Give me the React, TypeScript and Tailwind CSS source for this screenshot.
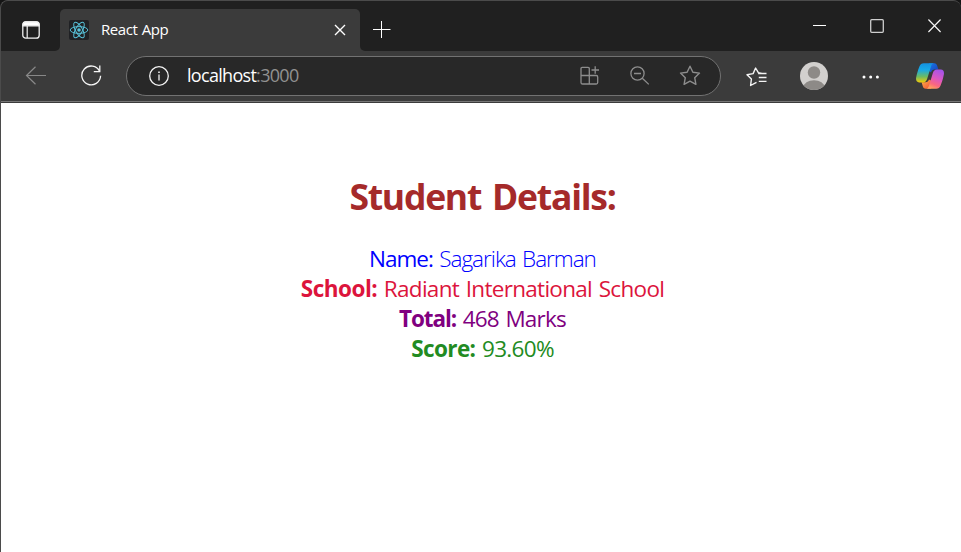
import React from 'react';

const FONT = "font-['Open_Sans','Noto_Sans',sans-serif]";

function ReactLogo() {
  return (
    <svg width="20" height="20" viewBox="0 0 20 20" fill="none" stroke="#58c4dc" strokeWidth="0.95">
      <rect width="20" height="20" rx="2" fill="#202124" stroke="none" />
      <ellipse cx="10" cy="10" rx="8.8" ry="3.4" />
      <ellipse cx="10" cy="10" rx="8.8" ry="3.4" transform="rotate(60 10 10)" />
      <ellipse cx="10" cy="10" rx="8.8" ry="3.4" transform="rotate(120 10 10)" />
      <circle cx="10" cy="10" r="1.8" fill="#58c4dc" stroke="none" />
    </svg>
  );
}

function CopilotLogo() {
  return (
    <svg width="28" height="26" viewBox="0 0 28 26">
      <defs>
        <linearGradient id="cpLeft" x1="0" y1="0" x2="0" y2="1">
          <stop offset="0" stopColor="#1490df" />
          <stop offset="0.35" stopColor="#18a9e6" />
          <stop offset="0.7" stopColor="#6dbb63" />
          <stop offset="1" stopColor="#f2cb08" />
        </linearGradient>
        <linearGradient id="cpRight" x1="0.7" y1="0" x2="0.3" y2="1">
          <stop offset="0" stopColor="#a653ea" />
          <stop offset="0.45" stopColor="#dd58c0" />
          <stop offset="0.75" stopColor="#fa6780" />
          <stop offset="1" stopColor="#ffa65c" />
        </linearGradient>
        <linearGradient id="cpTop" x1="0" y1="0" x2="1" y2="1">
          <stop offset="0" stopColor="#1877e8" />
          <stop offset="1" stopColor="#1740b8" />
        </linearGradient>
        <linearGradient id="cpBottom" x1="0" y1="0" x2="1" y2="1">
          <stop offset="0" stopColor="#ffb247" />
          <stop offset="1" stopColor="#ee4b35" />
        </linearGradient>
      </defs>
      <path d="M13 0.2H18.2C20 0.2 20.8 1.3 21.3 3L22.4 6.6H18.5C16.6 6.6 15.5 7.7 15 9.4L13 8Z" fill="url(#cpTop)" />
      <path d="M15 25.8H9.8C8 25.8 7.2 24.7 6.7 23L5.6 19.2H9.5C11.4 19.2 12.5 18.3 13 16.6L16 18Z" fill="url(#cpBottom)" />
      <path d="M7.8 0.2H18C16.1 0.5 15.5 1.8 15 3.5L11.2 15.8C10.4 18.2 9.3 19.4 7 19.4H3.2C.6 19.4-.4 17.2.2 14.3C.9 10.5 2 7.2 3.3 3.7C4.2 1.3 5.6.2 7.8.2Z" fill="url(#cpLeft)" />
      <path d="M20.2 25.8H10C11.9 25.5 12.5 24.2 13 22.5L16.8 10.2C17.6 7.8 18.7 6.6 21 6.6H24.8C27.4 6.6 28.4 8.8 27.8 11.7C27.1 15.5 26 18.8 24.7 22.3C23.8 24.7 22.4 25.8 20.2 25.8Z" fill="url(#cpRight)" />
    </svg>
  );
}

function TabStrip() {
  return (
    <div className="flex h-[50px] shrink-0 items-start">
      <div className="flex h-[50px] w-[59px] items-start rounded-br-[5px] bg-[#202020] pl-[21px] pt-[20px]">
        <svg width="18" height="18" viewBox="0 0 18 18" fill="none" stroke="#f2f2f2" strokeWidth="1.3">
          <rect x="0.8" y="0.8" width="16.4" height="16.4" rx="3" />
          <path d="M1 3.7Q1 1 3.7 1H14.3Q17 1 17 3.7V4.8H1Z" fill="#fff" />
          <path d="M5.2 5V17" strokeWidth="1.2" />
        </svg>
      </div>
      <div className="h-[50px] w-[300px] bg-[#202020] pt-[8px]">
        <div className="flex h-[42px] w-full items-center rounded-t-[5px] bg-[#3b3b3b] pl-[9px] pr-[14px]">
          <ReactLogo />
          <span className="mb-[2px] ml-[12px] whitespace-nowrap text-[15px] leading-5 tracking-[-0.45px] text-white [word-spacing:1px]">React App</span>
          <svg className="ml-auto" width="12" height="12" viewBox="0 0 12 12" stroke="#fff" strokeWidth="1.4">
            <path d="M1 1L11 11M11 1L1 11" />
          </svg>
        </div>
      </div>
      <div className="flex h-[50px] flex-1 items-start rounded-bl-[5px] bg-[#202020]">
        <svg className="ml-[13px] mt-[19px]" width="18" height="18" viewBox="0 0 18 18" stroke="#fff" strokeWidth="1">
          <path d="M0 9.5H17.5M8.5 1V18" />
        </svg>
        <svg className="ml-[422px] mt-[18px]" width="13" height="13" viewBox="0 0 13 13">
          <path d="M0 6.5H13" stroke="#fff" strokeWidth="1" />
        </svg>
        <svg className="ml-[44px] mt-[18px]" width="14" height="14" viewBox="0 0 14 14" fill="none" stroke="#cfcfcf" strokeWidth="1.3">
          <rect x="0.7" y="0.7" width="12.6" height="12.6" rx="1" />
        </svg>
        <svg className="ml-[44px] mt-[18px]" width="13" height="14" viewBox="0 0 13 14" stroke="#f5f5f5" strokeWidth="1.2">
          <path d="M0.4 0.5L12.6 13M12.6 0.5L0.4 13" />
        </svg>
      </div>
    </div>
  );
}

function Toolbar() {
  return (
    <div className="flex h-[50px] shrink-0 items-center bg-[#3b3b3b]">
      <svg className="ml-[24px]" width="22" height="20" viewBox="0 0 22 20" fill="none" stroke="#888" strokeWidth="1.2">
        <path d="M21 9.5H1.5M10.5 0.8L1.5 9.5L10.5 18.2" />
      </svg>
      <svg className="mb-px ml-[34px]" width="21" height="21" viewBox="0 0 21 21" fill="none" stroke="#f5f5f5" strokeWidth="1.3">
        <path d="M18.6 6.2A9.4 9.4 0 1 0 19.6 10.8" />
        <path d="M18.8 0.6V6.6H12.8" />
      </svg>
      <div className="ml-[24px] flex h-[40px] w-[595px] items-center rounded-full border border-[#727272] bg-[#282828]">
        <svg className="mb-px ml-[22px]" width="20" height="20" viewBox="0 0 20 20" fill="none" stroke="#f2f2f2" strokeWidth="1.3">
          <circle cx="10" cy="10" r="9.3" />
          <path d="M10 8.6V14.6" />
          <path d="M10 5.5V7.1" strokeWidth="1.6" />
        </svg>
        <span className="mb-[2px] ml-[18px] w-[112px] whitespace-nowrap text-[18px] leading-6 tracking-[-0.7px] text-white">
          localhost<span className="text-[#919191]">:3000</span>
        </span>
        <svg className="mb-px ml-[281px]" width="19" height="19" viewBox="0 0 19 19" fill="none" stroke="#8d8d8d" strokeWidth="1.3">
          <path d="M9.3 9.5V2.6Q9.3 1.3 8 1.3H2.3Q1 1.3 1 2.6V16.4Q1 18 2.6 18H16.2Q17.7 18 17.7 16.5V11Q17.7 9.5 16.2 9.5ZM1 9.5H9.3V18M15.2 0.3V7.7M11.5 4H19" />
        </svg>
        <svg className="mb-px ml-[31px]" width="20" height="19" viewBox="0 0 20 19" fill="none" stroke="#8d8d8d" strokeWidth="1.3">
          <circle cx="7.5" cy="7.5" r="6.6" />
          <path d="M4 7.5H11M12.3 12.2L18.8 18.4" />
        </svg>
        <svg className="mb-px ml-[29px]" width="22" height="21" viewBox="0 0 22 21" fill="none" stroke="#8d8d8d" strokeWidth="1.4" strokeLinejoin="round">
          <path d="M11 1.2L13.9 7.2L20.5 8.1L15.7 12.7L16.9 19.3L11 16.2L5.1 19.3L6.3 12.7L1.5 8.1L8.1 7.2Z" />
        </svg>
      </div>
      <svg className="ml-[25px] mt-[2px]" width="21" height="20" viewBox="0 0 21 20" fill="none" stroke="#f4f4f4" strokeWidth="1.4" strokeLinejoin="round">
        <path d="M16 6.4L12.5 5.8L9.6 1L7.1 6.6L1 7.7L5.4 12L4.6 18.5L10.5 15.4M12.2 6.5H20.5M12.8 10.5H20.5M12.8 14.4H20.5" />
      </svg>
      <svg className="ml-[33px]" width="28" height="28" viewBox="0 0 28 28">
        <clipPath id="avatarClip"><circle cx="14" cy="14" r="14" /></clipPath>
        <g clipPath="url(#avatarClip)">
          <rect width="28" height="28" fill="#d2d0ce" />
          <circle cx="14" cy="10.5" r="6.2" fill="#8d8a87" />
          <ellipse cx="14" cy="25.2" rx="10.5" ry="7" fill="#8d8a87" />
        </g>
      </svg>
      <svg className="ml-[34px] mt-px" width="18" height="4" viewBox="0 0 18 4" fill="#fff">
        <circle cx="2" cy="2" r="1.5" />
        <circle cx="8.7" cy="2" r="1.5" />
        <circle cx="15.4" cy="2" r="1.5" />
      </svg>
      <div className="ml-[36px]"><CopilotLogo /></div>
    </div>
  );
}

export default function App() {
  return (
    <div className={`flex h-[552px] w-[961px] flex-col overflow-hidden bg-white ${FONT}`}>
      <div className="h-[103px] shrink-0 bg-[#151515]">
        <div className="flex h-[103px] flex-col overflow-hidden rounded-t-[8px] border-l border-t border-[#4b4b4b] bg-[#3b3b3b]">
          <TabStrip />
          <Toolbar />
          <div className="h-px bg-[#777]" />
          <div className="h-px bg-[#3b3b3b]" />
        </div>
      </div>
      <main className="flex flex-1 flex-col items-center border-l border-[#4b4b4b] pl-[3px] pt-[69px]">
        <h1 className="whitespace-nowrap text-[35.5px] font-bold leading-[48px] tracking-[-1.25px] text-[brown] [word-spacing:3px]">Student Details:</h1>
        <div className="mt-[24px] flex flex-col items-center whitespace-nowrap text-[22.5px] leading-[30px] tracking-[-0.6px] [word-spacing:1.5px]">
          <p className="font-light tracking-[-1px] text-[blue]"><span className="font-medium">Name:</span> Sagarika Barman</p>
          <p className="tracking-[-0.7px] text-[crimson]"><span className="font-bold tracking-[-0.5px]">School:</span> Radiant International School</p>
          <p className="tracking-[-0.8px] text-[purple]"><span className="font-bold tracking-[-1.1px]">Total:</span> 468 Marks</p>
          <p className="tracking-[-0.7px] text-[forestgreen]"><span className="font-bold tracking-[-0.6px]">Score:</span> 93.60%</p>
        </div>
      </main>
    </div>
  );
}
